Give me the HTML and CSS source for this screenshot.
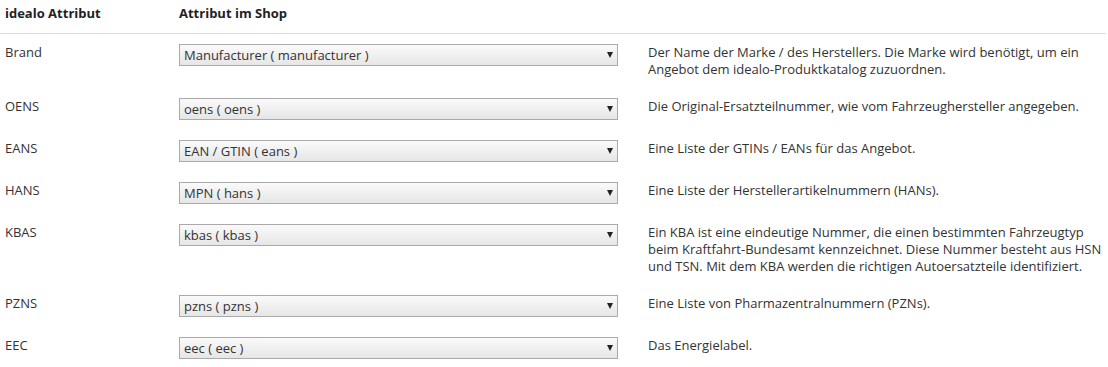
FILE: index.html
```html
<!DOCTYPE html>
<html lang="de">
<head>
<meta charset="UTF-8">
<title>idealo Attribute</title>
<link rel="stylesheet" href="styles.css">
</head>
<body>
<table class="attr-table">
  <thead>
    <tr>
      <th class="col-name">idealo Attribut</th>
      <th class="col-shop">Attribut im Shop</th>
      <th class="col-desc"></th>
    </tr>
  </thead>
  <tbody>
    <tr>
      <td class="col-name">Brand</td>
      <td class="col-shop"><span class="select-wrap"><select><option>Manufacturer ( manufacturer )</option></select></span></td>
      <td class="col-desc">Der Name der Marke / des Herstellers. Die Marke wird benötigt, um ein Angebot dem idealo-Produktkatalog zuzuordnen.</td>
    </tr>
    <tr>
      <td class="col-name">OENS</td>
      <td class="col-shop"><span class="select-wrap"><select><option>oens ( oens )</option></select></span></td>
      <td class="col-desc">Die Original-Ersatzteilnummer, wie vom Fahrzeughersteller angegeben.</td>
    </tr>
    <tr>
      <td class="col-name">EANS</td>
      <td class="col-shop"><span class="select-wrap"><select><option>EAN / GTIN ( eans )</option></select></span></td>
      <td class="col-desc">Eine Liste der GTINs / EANs für das Angebot.</td>
    </tr>
    <tr>
      <td class="col-name">HANS</td>
      <td class="col-shop"><span class="select-wrap"><select><option>MPN ( hans )</option></select></span></td>
      <td class="col-desc">Eine Liste der Herstellerartikelnummern (HANs).</td>
    </tr>
    <tr>
      <td class="col-name">KBAS</td>
      <td class="col-shop"><span class="select-wrap"><select><option>kbas ( kbas )</option></select></span></td>
      <td class="col-desc">Ein KBA ist eine eindeutige Nummer, die einen bestimmten Fahrzeugtyp beim Kraftfahrt-Bundesamt kennzeichnet. Diese Nummer besteht aus HSN und TSN. Mit dem KBA werden die richtigen Autoersatzteile identifiziert.</td>
    </tr>
    <tr>
      <td class="col-name">PZNS</td>
      <td class="col-shop"><span class="select-wrap"><select><option>pzns ( pzns )</option></select></span></td>
      <td class="col-desc">Eine Liste von Pharmazentralnummern (PZNs).</td>
    </tr>
    <tr>
      <td class="col-name">EEC</td>
      <td class="col-shop"><span class="select-wrap"><select><option>eec ( eec )</option></select></span></td>
      <td class="col-desc">Das Energielabel.</td>
    </tr>
  </tbody>
</table>
</body>
</html>
```

FILE: styles.css
```css
body {
  margin: 0;
  padding: 0;
  background-color: #fff;
  font-family: "Open Sans", "Liberation Sans", sans-serif;
  font-size: 13px;
  line-height: 17px;
  color: #333;
}
.attr-table {
  width: 1106px;
  border-collapse: collapse;
  table-layout: fixed;
}
.attr-table th {
  text-align: left;
  font-weight: bold;
  color: #222;
  padding: 5px 0 11px 0;
  border-bottom: 1px solid #ddd;
}
.attr-table td {
  vertical-align: top;
  padding: 10px 0 10px 0;
}
.attr-table .col-name {
  width: 174px;
  padding-left: 5px;
}
.attr-table .col-shop {
  width: 469px;
}
.attr-table .col-desc {
  padding-left: 0;
}
.select-wrap {
  position: relative;
  display: block;
  width: 439px;
}
.select-wrap select {
  appearance: none;
  -webkit-appearance: none;
  display: block;
  width: 100%;
  height: 22px;
  margin: 0;
  padding: 0 20px 0 4px;
  font-family: "Open Sans", "Liberation Sans", sans-serif;
  font-size: 13px;
  color: #333;
  border: 1px solid #aaa;
  border-radius: 0;
  background: linear-gradient(#fafafa, #e6e6e6);
}
.select-wrap::after {
  content: "";
  position: absolute;
  right: 5px;
  top: 8px;
  border-left: 3px solid transparent;
  border-right: 3px solid transparent;
  border-top: 6px solid #222;
  pointer-events: none;
}
```
